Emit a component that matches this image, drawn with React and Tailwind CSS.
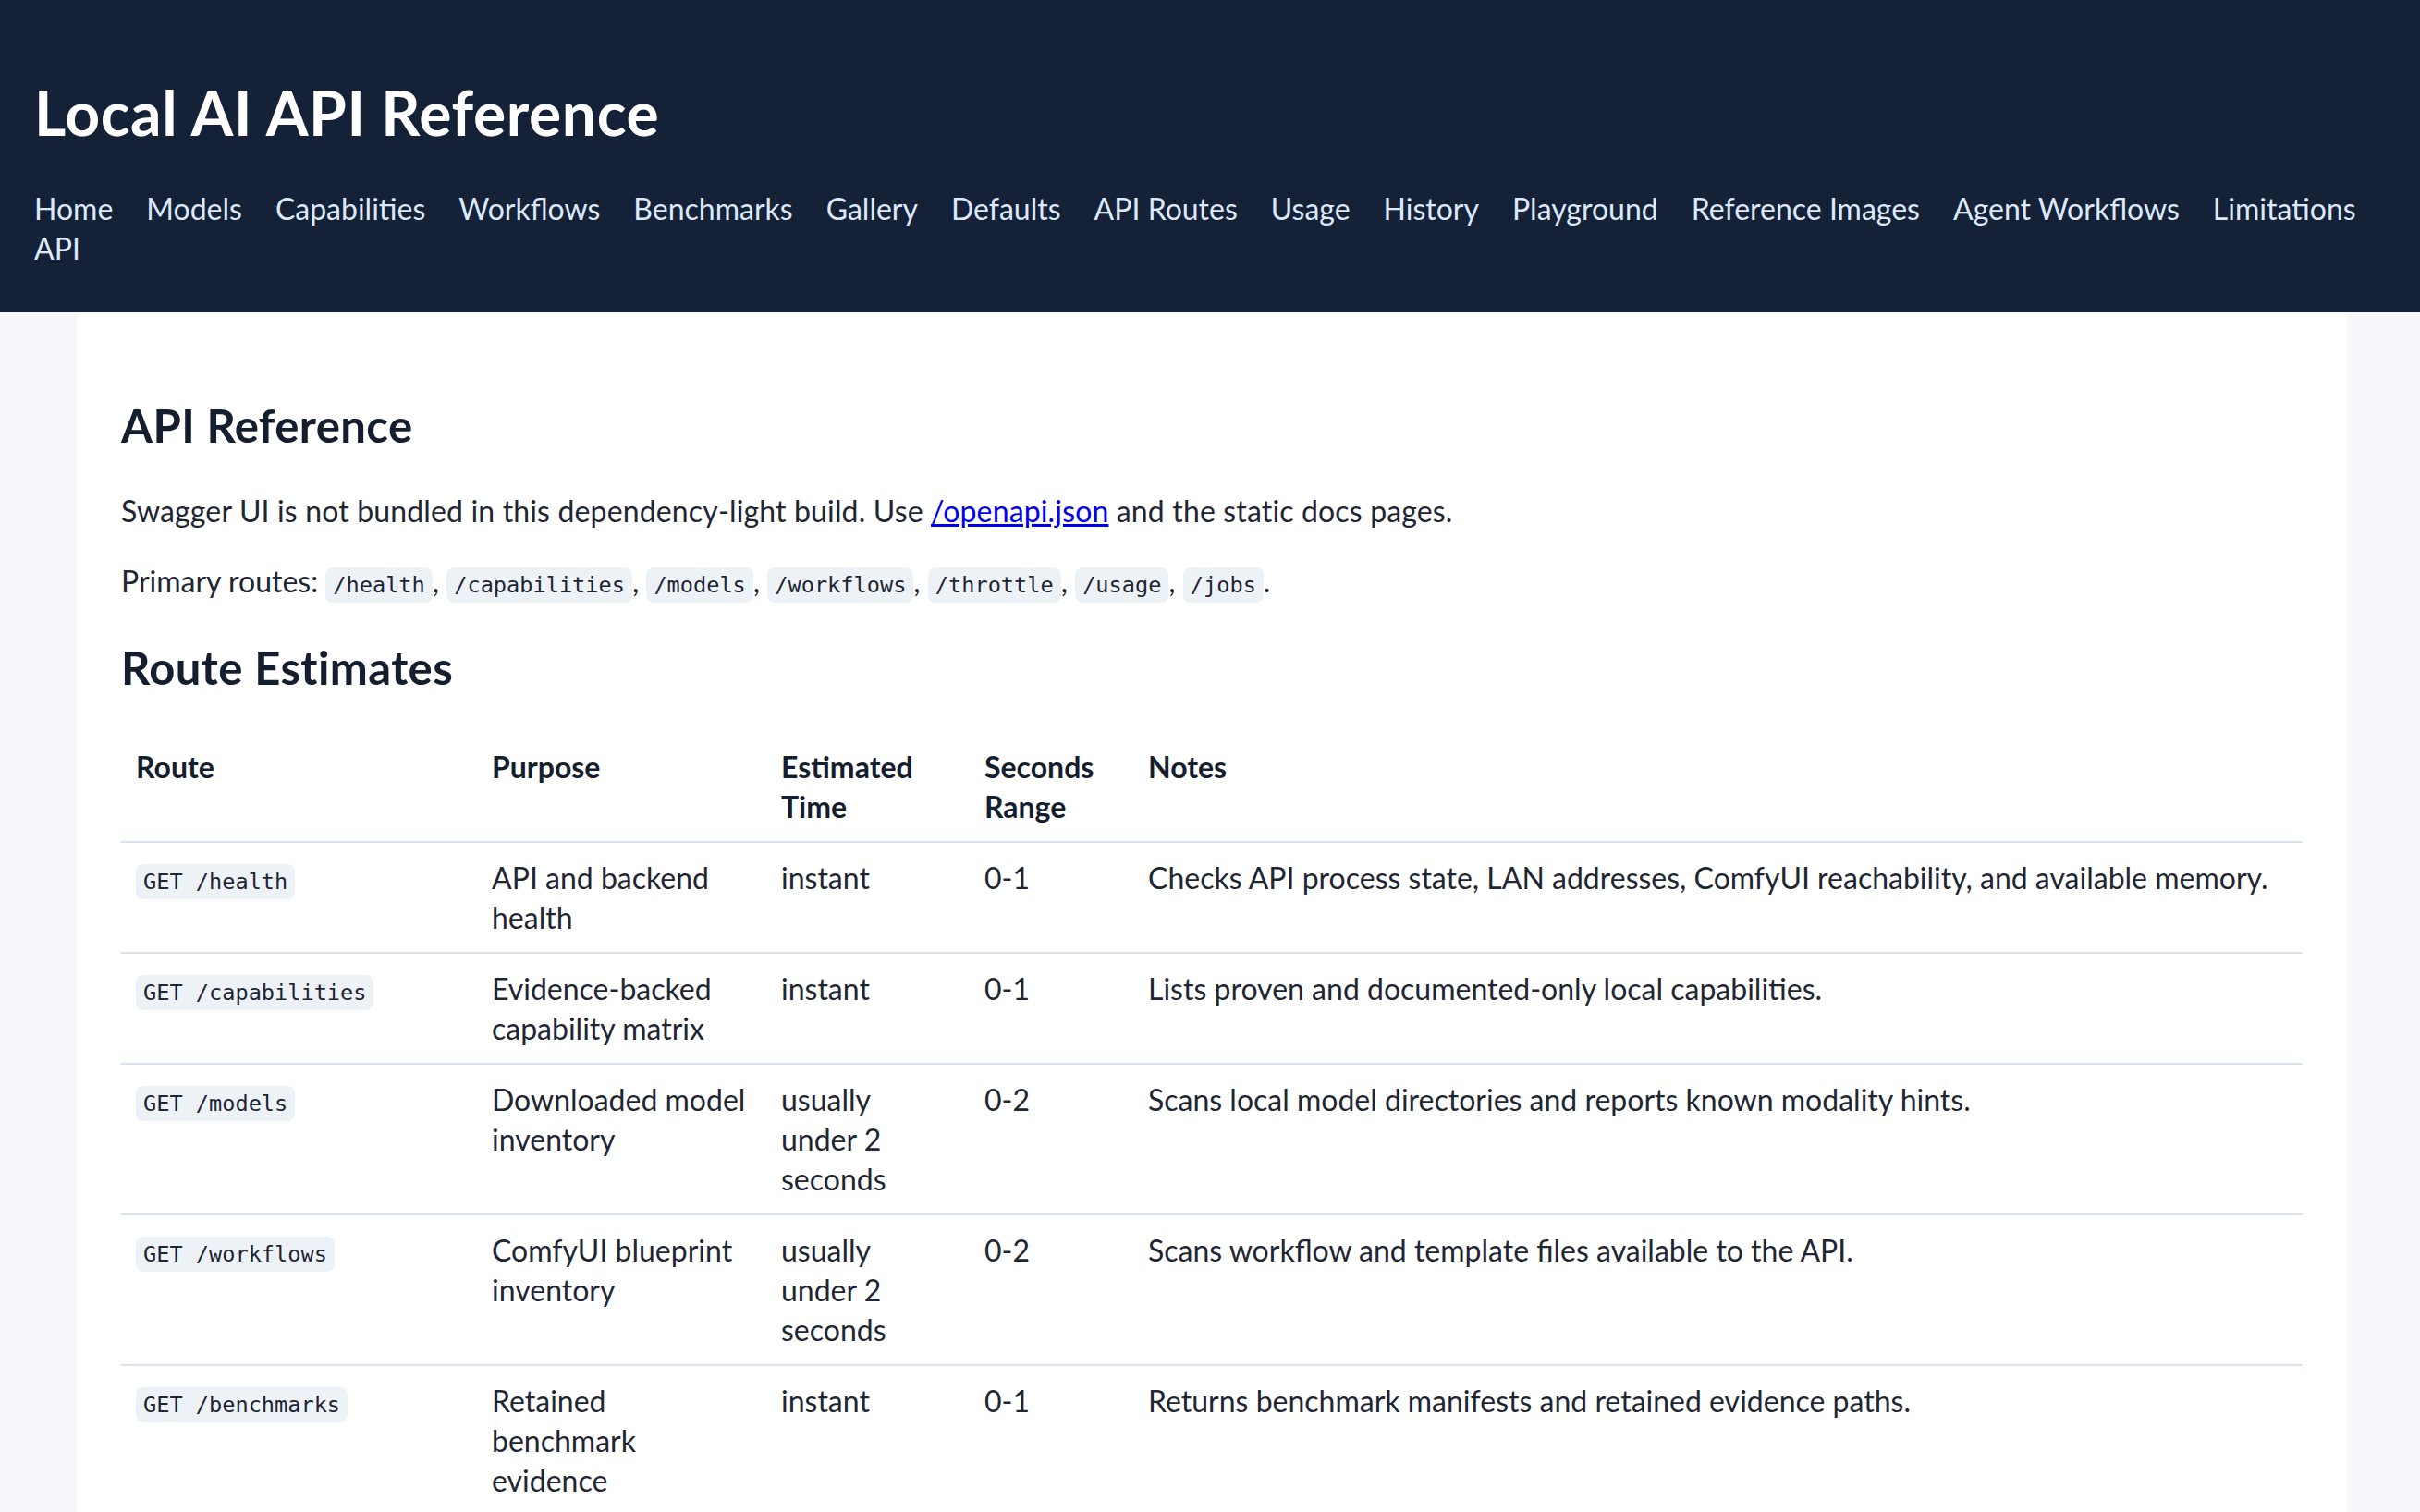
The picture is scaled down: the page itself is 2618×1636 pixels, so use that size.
const navLinks = [
  "Home",
  "Models",
  "Capabilities",
  "Workflows",
  "Benchmarks",
  "Gallery",
  "Defaults",
  "API Routes",
  "Usage",
  "History",
  "Playground",
  "Reference Images",
  "Agent Workflows",
  "Limitations",
  "API",
];

const primaryRoutes = ["/health", "/capabilities", "/models", "/workflows", "/throttle", "/usage", "/jobs"];

const routes = [
  {
    route: "GET /health",
    purpose: "API and backend health",
    time: "instant",
    range: "0-1",
    notes: "Checks API process state, LAN addresses, ComfyUI reachability, and available memory.",
  },
  {
    route: "GET /capabilities",
    purpose: "Evidence-backed capability matrix",
    time: "instant",
    range: "0-1",
    notes: "Lists proven and documented-only local capabilities.",
  },
  {
    route: "GET /models",
    purpose: "Downloaded model inventory",
    time: "usually under 2 seconds",
    range: "0-2",
    notes: "Scans local model directories and reports known modality hints.",
  },
  {
    route: "GET /workflows",
    purpose: "ComfyUI blueprint inventory",
    time: "usually under 2 seconds",
    range: "0-2",
    notes: "Scans workflow and template files available to the API.",
  },
  {
    route: "GET /benchmarks",
    purpose: "Retained benchmark evidence",
    time: "instant",
    range: "0-1",
    notes: "Returns benchmark manifests and retained evidence paths.",
  },
];

function Code({ children }) {
  return (
    <code className="rounded-[8px] bg-[#edf2f7] px-[8px] py-[5px] font-['DejaVu_Sans_Mono',monospace] text-[23.6px] text-[#1e2533]">
      {children}
    </code>
  );
}

function Header() {
  return (
    <header className="bg-[#142137] px-[37px] pt-[83px] pb-[48px]">
      <h1 className="text-[66px] leading-[78px] font-bold tracking-[0.6px] text-white">Local AI API Reference</h1>
      <nav className="mt-[43px] flex flex-wrap gap-x-[36px] text-[32px] leading-[43px] text-[#dde9fb]">
        {navLinks.map((link) => (
          <a key={link} href="#" className="hover:underline">
            {link}
          </a>
        ))}
      </nav>
    </header>
  );
}

function RouteTable() {
  return (
    <table className="mt-[41px] w-full table-fixed border-collapse text-left">
      <colgroup>
        <col className="w-[385px]" />
        <col className="w-[313px]" />
        <col className="w-[220px]" />
        <col className="w-[177px]" />
        <col />
      </colgroup>
      <thead>
        <tr className="border-b-2 border-[#d9e2ee]">
          <th className="px-[16px] py-[16px] align-top font-bold text-[#151e2f]">Route</th>
          <th className="px-[16px] py-[16px] align-top font-bold text-[#151e2f]">Purpose</th>
          <th className="px-[16px] py-[16px] align-top font-bold text-[#151e2f]">Estimated Time</th>
          <th className="px-[16px] py-[16px] align-top font-bold text-[#151e2f]">Seconds Range</th>
          <th className="px-[16px] py-[16px] align-top font-bold text-[#151e2f]">Notes</th>
        </tr>
      </thead>
      <tbody>
        {routes.map((r) => (
          <tr key={r.route} className="border-b-2 border-[#d9e2ee]">
            <td className="px-[16px] py-[16px] align-top">
              <Code>{r.route}</Code>
            </td>
            <td className="px-[16px] py-[16px] align-top">{r.purpose}</td>
            <td className="px-[16px] py-[16px] align-top">
              <div className="max-w-[175px]">{r.time}</div>
            </td>
            <td className="px-[16px] py-[16px] align-top">{r.range}</td>
            <td className="px-[16px] py-[16px] align-top">{r.notes}</td>
          </tr>
        ))}
      </tbody>
    </table>
  );
}

export default function App() {
  return (
    <div className="min-h-screen bg-[#f6f8fc] font-['Lato',sans-serif] text-[32px] leading-[43px] text-[#1f2633]">
      <Header />
      <main className="ml-[83px] w-[2456px] bg-white px-[48px] pt-[94px] pb-[48px]">
        <h2 className="text-[49px] leading-[57.6px] font-bold tracking-[0.4px] text-[#151e2f]">API Reference</h2>
        <p className="mt-[41px] tracking-[0.15px]">
          Swagger UI is not bundled in this dependency-light build. Use{" "}
          <a href="#" className="text-[#0000ee] underline">
            /openapi.json
          </a>{" "}
          and the static docs pages.
        </p>
        <p className="mt-[33px]">
          Primary routes:{" "}
          {primaryRoutes.map((route, i) => (
            <span key={route}>
              <Code>{route}</Code>
              {i < primaryRoutes.length - 1 ? ", " : "."}
            </span>
          ))}
        </p>
        <h2 className="mt-[39px] text-[49px] leading-[57.6px] font-bold tracking-[0.4px] text-[#151e2f]">
          Route Estimates
        </h2>
        <RouteTable />
      </main>
    </div>
  );
}
